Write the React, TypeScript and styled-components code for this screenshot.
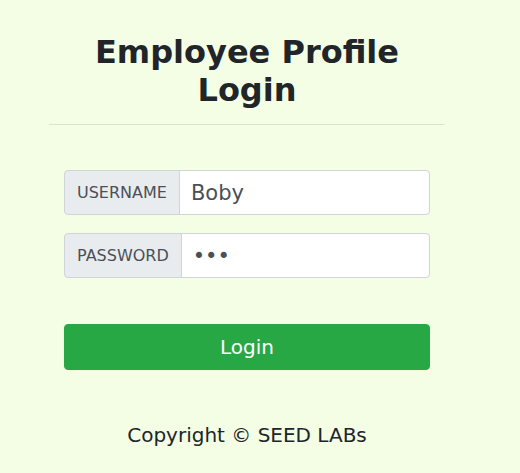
import React from "react";
import styled, { createGlobalStyle } from "styled-components";

const GlobalStyle = createGlobalStyle`
  html, body {
    margin: 0;
    padding: 0;
    background: #f3fee4;
  }
  body {
    font-family: "DejaVu Sans", "Liberation Sans", sans-serif;
    color: #212529;
  }
`;

const Page = styled.div`
  width: 520px;
  min-height: 473px;
  padding: 33px 0 0 49px;
  box-sizing: border-box;
`;

const Container = styled.div`
  width: 396px;
`;

const Title = styled.h2`
  margin: 0;
  font-size: 32px;
  line-height: 38.4px;
  font-weight: 700;
  text-align: center;
  color: #212529;
`;

const Divider = styled.hr`
  margin: 14px 0 0;
  border: 0;
  border-top: 1px solid rgba(0, 0, 0, 0.1);
`;

const Form = styled.form`
  padding: 45px 15px 0;
  display: flex;
  flex-direction: column;
`;

const InputGroup = styled.div`
  display: flex;
  height: 45px;
  margin-bottom: 18px;
`;

const Addon = styled.span`
  display: flex;
  align-items: center;
  padding: 0 12px;
  font-size: 16px;
  color: #495057;
  background: #e9ecef;
  border: 1px solid #ced4da;
  border-radius: 4px 0 0 4px;
`;

const Field = styled.input`
  flex: 1;
  min-width: 0;
  margin-left: -1px;
  padding: 2px 11px 0;
  font-family: inherit;
  font-size: 21px;
  color: #495057;
  background: #fff;
  border: 1px solid #ced4da;
  border-radius: 0 4px 4px 0;
  outline: none;
`;

const LoginButton = styled.button`
  margin-top: 28px;
  height: 46px;
  font-family: inherit;
  font-size: 20px;
  color: #fff;
  background: #28a745;
  border: 1px solid #28a745;
  border-radius: 4px;
  cursor: pointer;
`;

const Footer = styled.p`
  margin: 53px 0 0;
  text-align: center;
  font-size: 20px;
  color: #212529;
`;

export default function App() {
  return (
    <>
      <GlobalStyle />
      <Page>
        <Container>
          <Title>
            Employee Profile
            <br />
            Login
          </Title>
          <Divider />
          <Form onSubmit={(e) => e.preventDefault()}>
            <InputGroup>
              <Addon>USERNAME</Addon>
              <Field type="text" defaultValue="Boby" />
            </InputGroup>
            <InputGroup>
              <Addon>PASSWORD</Addon>
              <Field type="password" defaultValue="abc" />
            </InputGroup>
            <LoginButton type="submit">Login</LoginButton>
          </Form>
          <Footer>Copyright © SEED LABs</Footer>
        </Container>
      </Page>
    </>
  );
}
